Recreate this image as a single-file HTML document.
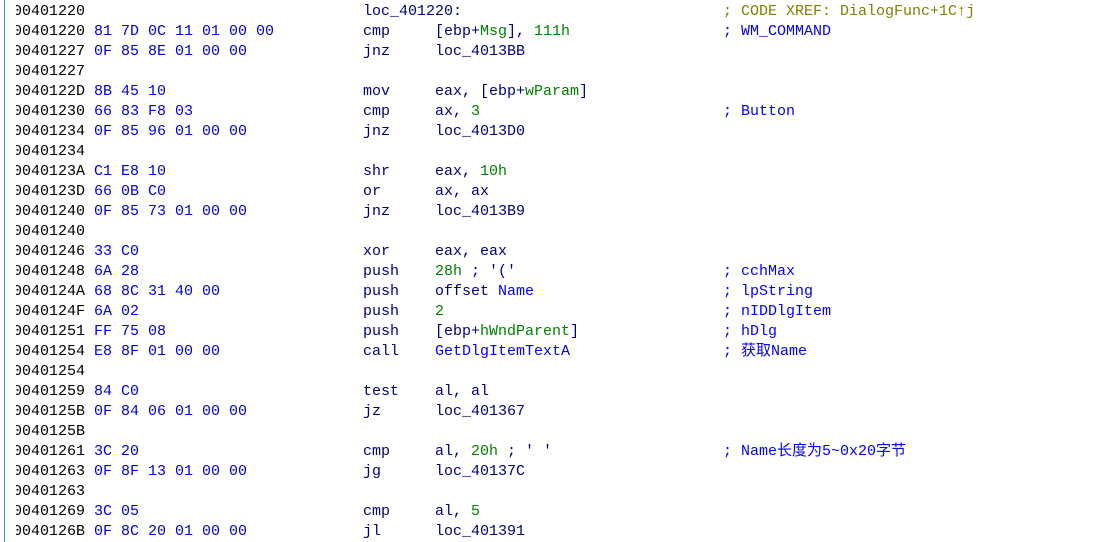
<!DOCTYPE html>
<html><head><meta charset="utf-8"><style>
body{margin:0;width:1093px;height:542px;background:#fff;overflow:hidden;position:relative;font-family:"Liberation Mono","Noto Sans CJK SC",monospace;font-size:15px}
.r{position:absolute;left:0;height:20px;line-height:20px;white-space:pre;width:1093px}
.r span{position:absolute;top:0}
.a{left:13px;color:#000}
.b{left:94px;color:#0000e0}
.m{left:363px;color:#000080}
.o{left:435px;color:#000080}
.c{left:723px;color:#0000ff}
.x{color:#808000}
.g{color:#008000}
.n{color:#0000ff}
#clip{position:absolute;left:0;top:0;width:16px;height:542px;background:#fff;z-index:2}
#ln{position:absolute;left:4px;top:0;width:1px;height:542px;background:#3390ff;z-index:3}
</style></head><body>
<div id="clip"></div><div id="ln"></div>
<div class="r" style="top:2px"><span class="a">00401220</span><span class="m">loc_401220:</span><span class="c x">; CODE XREF: DialogFunc+1C↑j</span></div>
<div class="r" style="top:22px"><span class="a">00401220</span><span class="b">81 7D 0C 11 01 00 00</span><span class="m">cmp</span><span class="o">[ebp+<i class="g" style="font-style:normal">Msg</i>], <i class="g" style="font-style:normal">111h</i></span><span class="c">; WM_COMMAND</span></div>
<div class="r" style="top:42px"><span class="a">00401227</span><span class="b">0F 85 8E 01 00 00</span><span class="m">jnz</span><span class="o">loc_4013BB</span></div>
<div class="r" style="top:62px"><span class="a">00401227</span></div>
<div class="r" style="top:82px"><span class="a">0040122D</span><span class="b">8B 45 10</span><span class="m">mov</span><span class="o">eax, [ebp+<i class="g" style="font-style:normal">wParam</i>]</span></div>
<div class="r" style="top:102px"><span class="a">00401230</span><span class="b">66 83 F8 03</span><span class="m">cmp</span><span class="o">ax, <i class="g" style="font-style:normal">3</i></span><span class="c">; Button</span></div>
<div class="r" style="top:122px"><span class="a">00401234</span><span class="b">0F 85 96 01 00 00</span><span class="m">jnz</span><span class="o">loc_4013D0</span></div>
<div class="r" style="top:142px"><span class="a">00401234</span></div>
<div class="r" style="top:162px"><span class="a">0040123A</span><span class="b">C1 E8 10</span><span class="m">shr</span><span class="o">eax, <i class="g" style="font-style:normal">10h</i></span></div>
<div class="r" style="top:182px"><span class="a">0040123D</span><span class="b">66 0B C0</span><span class="m">or</span><span class="o">ax, ax</span></div>
<div class="r" style="top:202px"><span class="a">00401240</span><span class="b">0F 85 73 01 00 00</span><span class="m">jnz</span><span class="o">loc_4013B9</span></div>
<div class="r" style="top:222px"><span class="a">00401240</span></div>
<div class="r" style="top:242px"><span class="a">00401246</span><span class="b">33 C0</span><span class="m">xor</span><span class="o">eax, eax</span></div>
<div class="r" style="top:262px"><span class="a">00401248</span><span class="b">6A 28</span><span class="m">push</span><span class="o"><i class="g" style="font-style:normal">28h</i> ; '('</span><span class="c">; cchMax</span></div>
<div class="r" style="top:282px"><span class="a">0040124A</span><span class="b">68 8C 31 40 00</span><span class="m">push</span><span class="o">offset <i class="n" style="font-style:normal">Name</i></span><span class="c">; lpString</span></div>
<div class="r" style="top:302px"><span class="a">0040124F</span><span class="b">6A 02</span><span class="m">push</span><span class="o"><i class="g" style="font-style:normal">2</i></span><span class="c">; nIDDlgItem</span></div>
<div class="r" style="top:322px"><span class="a">00401251</span><span class="b">FF 75 08</span><span class="m">push</span><span class="o">[ebp+<i class="g" style="font-style:normal">hWndParent</i>]</span><span class="c">; hDlg</span></div>
<div class="r" style="top:342px"><span class="a">00401254</span><span class="b">E8 8F 01 00 00</span><span class="m">call</span><span class="o n">GetDlgItemTextA</span><span class="c">; 获取Name</span></div>
<div class="r" style="top:362px"><span class="a">00401254</span></div>
<div class="r" style="top:382px"><span class="a">00401259</span><span class="b">84 C0</span><span class="m">test</span><span class="o">al, al</span></div>
<div class="r" style="top:402px"><span class="a">0040125B</span><span class="b">0F 84 06 01 00 00</span><span class="m">jz</span><span class="o">loc_401367</span></div>
<div class="r" style="top:422px"><span class="a">0040125B</span></div>
<div class="r" style="top:442px"><span class="a">00401261</span><span class="b">3C 20</span><span class="m">cmp</span><span class="o">al, <i class="g" style="font-style:normal">20h</i> ; ' '</span><span class="c">; Name长度为5~0x20字节</span></div>
<div class="r" style="top:462px"><span class="a">00401263</span><span class="b">0F 8F 13 01 00 00</span><span class="m">jg</span><span class="o">loc_40137C</span></div>
<div class="r" style="top:482px"><span class="a">00401263</span></div>
<div class="r" style="top:502px"><span class="a">00401269</span><span class="b">3C 05</span><span class="m">cmp</span><span class="o">al, <i class="g" style="font-style:normal">5</i></span></div>
<div class="r" style="top:522px"><span class="a">0040126B</span><span class="b">0F 8C 20 01 00 00</span><span class="m">jl</span><span class="o">loc_401391</span></div>
</body></html>
